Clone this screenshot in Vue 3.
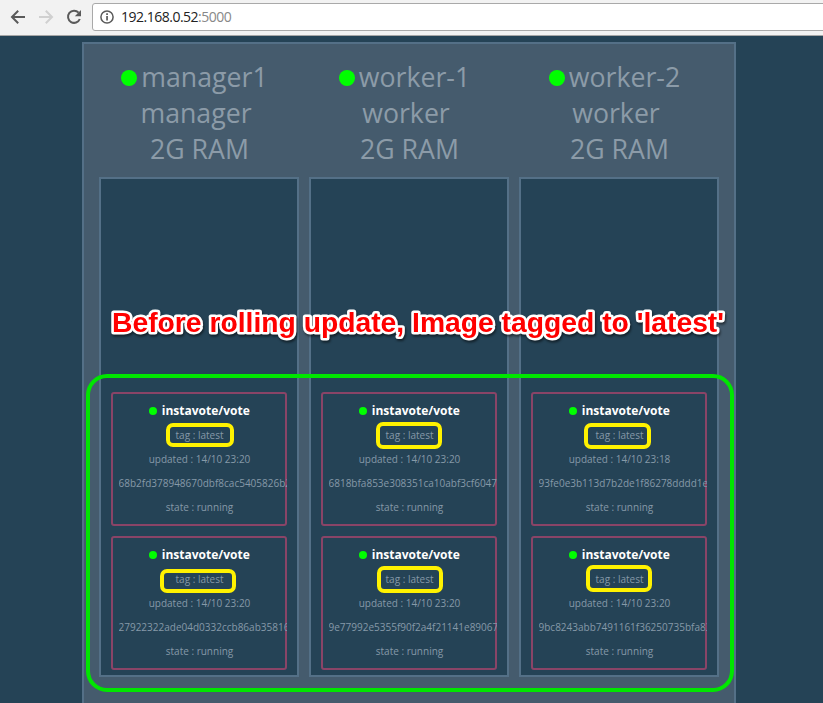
<script setup>
const nodes = [
  {
    name: 'manager1', role: 'manager', ram: '2G RAM',
    tasks: [
      { updated: '14/10 23:20', id: '68b2fd378948670dbf8cac5405826b2' },
      { updated: '14/10 23:20', id: '27922322ade04d0332ccb86ab35816' },
    ],
  },
  {
    name: 'worker-1', role: 'worker', ram: '2G RAM',
    tasks: [
      { updated: '14/10 23:20', id: '6818bfa853e308351ca10abf3cf6047' },
      { updated: '14/10 23:20', id: '9e77992e5355f90f2a4f21141e89067' },
    ],
  },
  {
    name: 'worker-2', role: 'worker', ram: '2G RAM',
    tasks: [
      { updated: '14/10 23:18', id: '93fe0e3b113d7b2de1f86278dddd1e' },
      { updated: '14/10 23:20', id: '9bc8243abb7491161f36250735bfa83' },
    ],
  },
]
// Hand-drawn highlight marks: x, y, width, height
const marks = [
  [166, 423, 68, 24], [376, 422, 66, 27], [584, 423, 67, 26],
  [160, 569, 76, 24], [377, 566, 66, 27], [586, 565, 66, 27],
]
</script>

<template>
  <div class="page">
    <header class="toolbar">
      <svg class="nav" width="84" height="35" viewBox="0 0 84 35" fill="none">
        <path d="M25 17H12.5M18.2 10.8L12 17l6.2 6.2" stroke="#5a5a5a" stroke-width="2" />
        <path d="M39 17h12.5M45.8 10.8L52 17l-6.2 6.2" stroke="#d0d0d0" stroke-width="2" />
        <path d="M78.6 12.6A6.1 6.1 0 1 0 79.8 19" stroke="#5a5a5a" stroke-width="2" />
        <path d="M81 10v6.2h-6.2z" fill="#5a5a5a" />
      </svg>
      <div class="address">
        <svg width="14" height="14" viewBox="0 0 14 14">
          <circle cx="7" cy="7" r="6.1" fill="none" stroke="#5a5a5a" stroke-width="1.5" />
          <path d="M6.2 6h1.7v4.6H6.2zM6.2 3.3h1.7v1.6H6.2z" fill="#5a5a5a" />
        </svg>
        <span class="url">192.168.0.52<i>:5000</i></span>
      </div>
    </header>
    <main class="cluster">
      <section v-for="n in nodes" :key="n.name" class="node">
        <div class="head">
          <div class="name"><b class="dot big"></b>{{ n.name }}</div>
          <div>{{ n.role }}</div>
          <div class="ram">{{ n.ram }}</div>
        </div>
        <div class="stack">
          <article v-for="t in n.tasks" :key="t.id" class="task">
            <div class="title"><b class="dot"></b>instavote/vote</div>
            <div>tag : latest</div>
            <div>updated : {{ t.updated }}</div>
            <div class="hash">{{ t.id }}</div>
            <div>state : running</div>
          </article>
        </div>
      </section>
    </main>
    <div class="group"></div>
    <div
      v-for="(m, i) in marks" :key="i" class="mark"
      :style="{ left: m[0] + 'px', top: m[1] + 'px', width: m[2] + 'px', height: m[3] + 'px' }"
    ></div>
    <svg class="caption" width="660" height="50">
      <text x="12" y="32" textLength="612" lengthAdjust="spacingAndGlyphs">Before rolling update, Image tagged to 'latest'</text>
    </svg>
  </div>
</template>

<style>
body { margin: 0; background: #254356; overflow: hidden; }
</style>

<style scoped>
.page {
  position: relative; width: 823px; height: 703px; overflow: hidden;
  background: #254356; color: #8699a8; font-family: "Open Sans", sans-serif;
}
.page * { box-sizing: border-box; }
.toolbar {
  display: flex; height: 36px; background: #f2f2f2; border-bottom: 1px solid #a6a6a6; overflow: hidden;
}
.nav { flex: none; }
.address {
  display: flex; align-items: center; gap: 8px; flex: 1; height: 28px;
  margin: 3px -4px 0 8px; padding-left: 7px; background: #fff;
  border: 1px solid #a9a9a9; border-radius: 3px;
}
.url { margin-left: -1px; font: 14px/20px "Open Sans", sans-serif; letter-spacing: -0.5px; color: #222; }
.url i { font-style: normal; color: #888; }
.cluster {
  display: flex; gap: 10px; width: 654px; height: 680px; margin: 6px 0 0 82px;
  padding: 15px 15px 0; background: #455b6d; border: 2px solid #547087;
}
.node { width: 200px; }
.head { height: 118px; text-align: center; font-size: 26.7px; line-height: 36px; font-weight: 400; color: #8c9ba8; }
.name { display: flex; justify-content: center; align-items: center; gap: 4px; padding-right: 9px; }
.head > div { margin-right: 6px; }
.head > .name { margin-right: 0; }
.head > .ram { margin-right: -1px; }
.dot { width: 8px; height: 8px; border-radius: 50%; background: #0f0; flex: none; }
.dot.big { width: 16px; height: 16px; margin-top: 2px; }
.stack {
  display: flex; flex-direction: column; justify-content: flex-end; gap: 10px;
  height: 500px; padding: 0 10px 5px; background: #254356; border: 2px solid #547087;
}
.task {
  height: 134px; width: 176px; padding: 5px 0 0 6px; border: 2px solid #8a4467; border-radius: 3px;
  font-size: 10px; line-height: 24px; text-align: center; white-space: nowrap;
}
.task > div { margin-right: 5px; }
.title {
  display: flex; justify-content: center; align-items: center; gap: 4.5px;
  height: 24px; font-size: 12px; font-weight: 700; color: #fff;
}
.task > .hash { margin-right: -2px; margin-left: -0.5px; overflow: hidden; text-align: left; }
.group {
  position: absolute; left: 86px; top: 374px; width: 648px; height: 318px;
  border: 4px solid #00e600; border-radius: 21px;
}
.mark { position: absolute; border: 4px solid #fff200; border-radius: 7px; }
.caption { position: absolute; left: 100px; top: 300px; filter: drop-shadow(1px 2px 1px rgba(0, 0, 0, .5)); }
.caption text {
  font: bold 27px "Liberation Sans", sans-serif; fill: #f00; stroke: #fff; stroke-width: 5px;
  stroke-linejoin: round; paint-order: stroke;
}
</style>
